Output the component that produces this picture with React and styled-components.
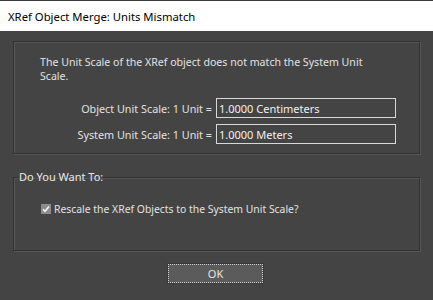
import React from 'react';
import styled, { createGlobalStyle } from 'styled-components';

const Global = createGlobalStyle`
  html, body {
    margin: 0;
    padding: 0;
    background: #444444;
  }
  body {
    font-family: "Noto Sans", "Open Sans", sans-serif;
    font-size: 10.5px;
  }
`;

const Window = styled.div`
  width: 433px;
  height: 300px;
  display: flex;
  flex-direction: column;
  background: #444444;
  overflow: hidden;
`;

const TitleBar = styled.div`
  height: 31px;
  flex: none;
  display: flex;
  align-items: center;
  padding-left: 8px;
  background: #ffffff;
  border-top: 1px solid #3a3a3a;
  box-sizing: border-box;
  color: #000000;
  font-size: 11.3px;
`;

const Body = styled.div`
  flex: 1;
  display: flex;
  flex-direction: column;
  padding: 10px 13px 0 13px;
  color: #e2e2e2;
`;

const Group = styled.fieldset`
  margin: ${({ $top }) => $top || 0}px 0 0 0;
  padding: ${({ $pad }) => $pad};
  height: ${({ $h }) => $h}px;
  box-sizing: border-box;
  border: 1px solid #333333;
  box-shadow: 1px 1px 0 #555555, inset 1px 1px 0 #555555;
  min-width: 0;
`;

const Legend = styled.legend`
  padding: 0;
  margin-left: 3px;
  color: #e8e8e8;
  line-height: 14px;
  font-size: 11px;
`;

const Message = styled.p`
  margin: 0;
  line-height: 14px;
  width: 330px;
  font-size: 10.6px;
`;

const Form = styled.div`
  display: grid;
  grid-template-columns: 172px 180px;
  column-gap: 4px;
  row-gap: 6px;
  margin-top: 15px;
  align-items: center;
`;

const Label = styled.label`
  text-align: right;
  white-space: nowrap;
  font-size: 10.8px;
`;

const Field = styled.div`
  height: 20px;
  box-sizing: border-box;
  border: 1px solid #d8d8d8;
  padding-left: 2px;
  display: flex;
  align-items: center;
  color: #f0f0f0;
  font-size: 11px;
`;

const CheckRow = styled.label`
  display: flex;
  align-items: center;
  gap: 3px;
  margin-left: 25px;
  margin-top: 18px;
  font-size: 10.4px;
`;

const Box = styled.span`
  width: 10px;
  height: 10px;
  background: #8c8c8c;
  display: flex;
  align-items: center;
  justify-content: center;
`;

const Footer = styled.div`
  display: flex;
  justify-content: center;
  margin-top: 12px;
  padding-right: 2px;
`;

const Button = styled.button`
  width: 97px;
  height: 21px;
  background: #5b5b5b;
  border: 1px solid #3a3a3a;
  outline: 1px dotted #d0d0d0;
  outline-offset: -2px;
  color: #e8e8e8;
  font-family: inherit;
  font-size: 11px;
  padding: 0;
`;

export default function App() {
  return (
    <>
      <Global />
      <Window>
        <TitleBar>XRef Object Merge: Units Mismatch</TitleBar>
        <Body>
          <Group $h={113} $pad="13px 0 0 26px">
            <Message>
              The Unit Scale of the XRef object does not match the System Unit Scale.
            </Message>
            <Form>
              <Label>Object Unit Scale: 1 Unit =</Label>
              <Field>1.0000 Centimeters</Field>
              <Label>System Unit Scale: 1 Unit =</Label>
              <Field>1.0000 Meters</Field>
            </Form>
          </Group>
          <Group $top={16} $h={81} $pad="0 0 0 2px">
            <Legend>Do You Want To:</Legend>
            <CheckRow>
              <Box>
                <svg width="8" height="8" viewBox="0 0 8 8">
                  <path d="M1 4.2 L3 6.2 L7 1.5" stroke="#f4f4f4" strokeWidth="1.6" fill="none" />
                </svg>
              </Box>
              Rescale the XRef Objects to the System Unit Scale?
            </CheckRow>
          </Group>
          <Footer>
            <Button>OK</Button>
          </Footer>
        </Body>
      </Window>
    </>
  );
}
